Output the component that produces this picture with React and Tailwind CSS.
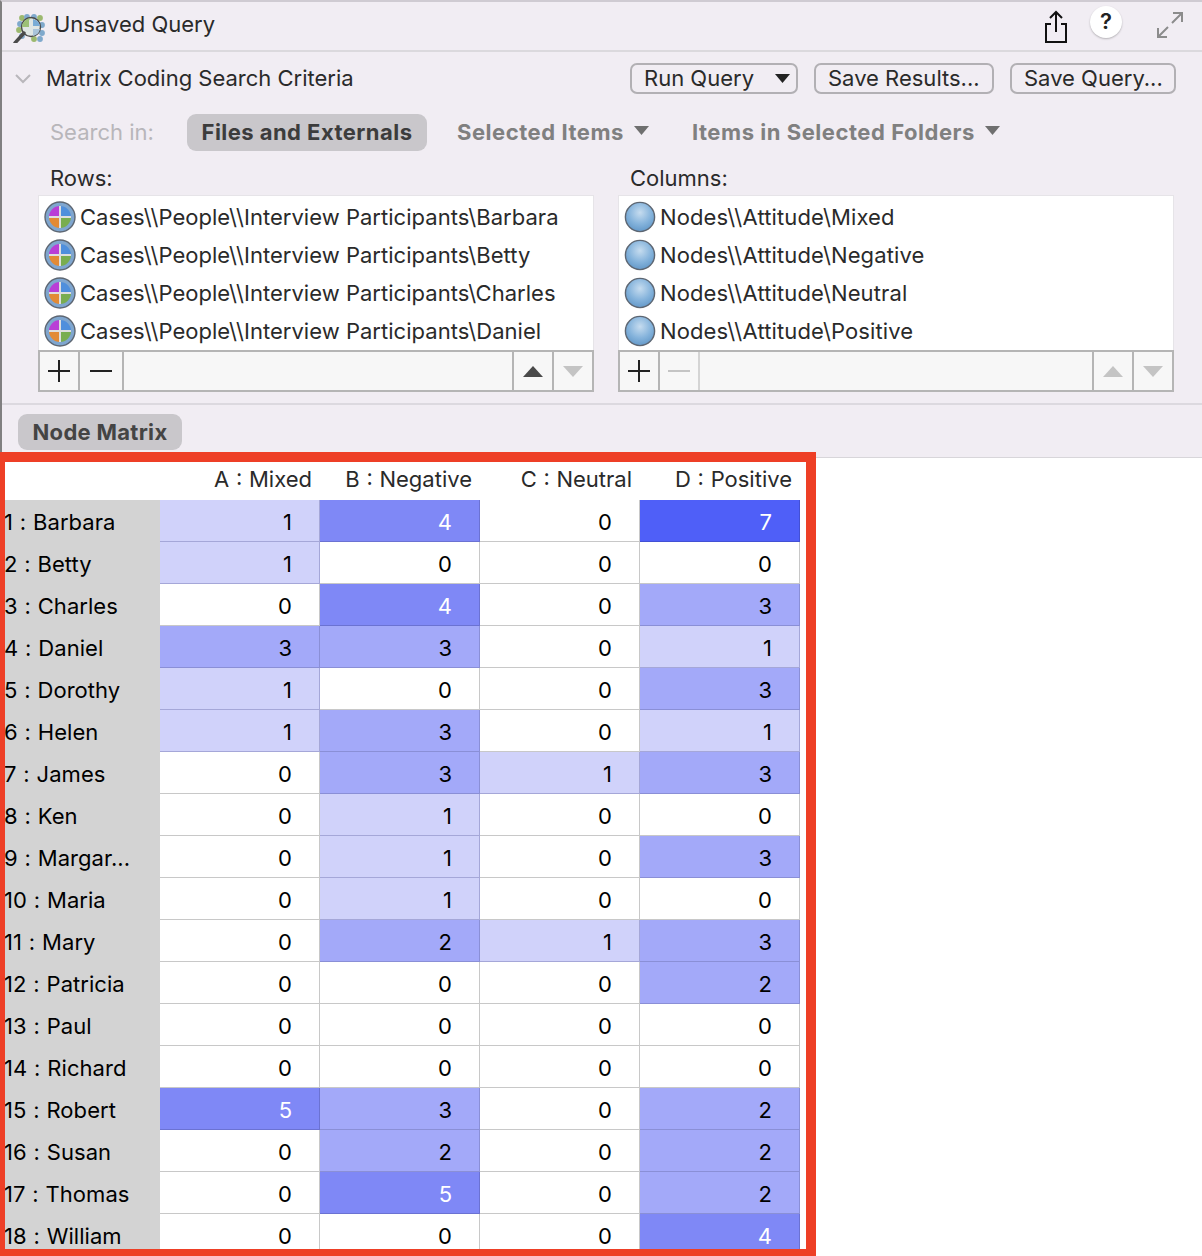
import React from "react";

const FONT = "font-['Inter','Liberation_Sans',sans-serif]";

function CaseIcon() {
  return (
    <svg width="32" height="32" viewBox="0 0 32 32" className="shrink-0">
      <circle cx="16" cy="16" r="15" fill="#7fa6cf" stroke="#5d6672" strokeWidth="1.4" />
      <path d="M16 16V5a11 11 0 0 0-11 11z" fill="#b93ed6" />
      <path d="M16 16V5a11 11 0 0 1 11 11z" fill="#4f8fdc" />
      <path d="M16 16H5a11 11 0 0 0 11 11z" fill="#e28a35" />
      <path d="M16 16h11a11 11 0 0 1-11 11z" fill="#79ad4f" />
      <path d="M16 5v22M5 16h22" stroke="#dedede" strokeWidth="2" />
    </svg>
  );
}

function NodeIcon() {
  return (
    <svg width="32" height="32" viewBox="0 0 32 32" className="shrink-0">
      <defs>
        <radialGradient id="ball" cx="50%" cy="35%" r="70%">
          <stop offset="0%" stopColor="#c6dcef" />
          <stop offset="55%" stopColor="#86b4dc" />
          <stop offset="100%" stopColor="#5d94c6" />
        </radialGradient>
      </defs>
      <circle cx="16" cy="16" r="14.6" fill="url(#ball)" stroke="#5d6672" strokeWidth="1.4" />
    </svg>
  );
}

function QueryIcon() {
  return (
    <svg width="34" height="34" viewBox="0 0 34 34" className="shrink-0">
      {[[10, 4], [15, 3], [22, 3], [28, 4], [8, 10], [30, 11], [7, 16], [30, 19], [28, 25], [22, 25], [10, 22]].map(([x, y], i) => (
        <circle key={i} cx={x} cy={y + 5} r="2.9" fill={i % 3 === 0 ? "#9cb96f" : "#7fa9cc"} />
      ))}
      <circle cx="19" cy="18" r="9.5" fill="#dfe6e4" stroke="#4a4a4a" strokeWidth="1.4" />
      <path d="M19 9a9 9 0 0 0-9 9h7v-7z" fill="#9cc077" />
      <path d="M21 10a9 9 0 0 1 7 7h-7z" fill="#79acd6" />
      <path d="M21 20h7a9 9 0 0 1-7 7z" fill="#a9c4da" />
      <path d="M12 25 3 35" stroke="#4a4a4a" strokeWidth="3.4" strokeLinecap="round" transform="translate(0 -1)" />
    </svg>
  );
}

function Triangle({ down, color }) {
  return (
    <svg width="20" height="11" viewBox="0 0 20 11">
      <path d={down ? "M0 0h20L10 11z" : "M10 0l10 11H0z"} fill={color} />
    </svg>
  );
}

function Caret({ color = "#6f6f6f" }) {
  return (
    <svg width="15" height="9" viewBox="0 0 15 9" className="ml-[10px] mb-1">
      <path d="M0 0h15L7.5 9z" fill={color} />
    </svg>
  );
}

function ToolBar({ minusOff, upOff }) {
  return (
    <div className="flex h-[42px] border-2 border-[#b5b5b5] bg-[#f7f7f7]">
      <div className="flex w-[40px] items-center justify-center border-r-2 border-[#b5b5b5]">
        <svg width="24" height="24" viewBox="0 0 24 24"><path d="M12 1v22M1 12h22" stroke="#222" strokeWidth="2" /></svg>
      </div>
      <div className={`flex items-center justify-center border-r-2 ${minusOff ? "w-[40px] border-[#d4d4d4]" : "w-[44px] border-[#b5b5b5]"}`}>
        <svg width="24" height="4" viewBox="0 0 24 4"><path d="M1 2h22" stroke={minusOff ? "#c4c4c4" : "#222"} strokeWidth="2" /></svg>
      </div>
      <div className="flex-1 border-r-2 border-[#b5b5b5]" />
      <div className="flex w-[40px] items-center justify-center border-r-2 border-[#b5b5b5]">
        <Triangle color={upOff ? "#c4c4c4" : "#4a4a4a"} />
      </div>
      <div className="flex w-[38px] items-center justify-center">
        <Triangle down color="#c4c4c4" />
      </div>
    </div>
  );
}

function ListPanel({ label, items, Icon, minusOff, upOff, track }) {
  return (
    <div className="flex w-[556px] flex-col">
      <div className="h-[34px] pl-[12px] text-[#2a2a2a] leading-[34px]">{label}</div>
      <div className="border border-[#e6e4e8] border-b-0 bg-white pt-[2px]">
        {items.map((t) => (
          <div key={t} className={`flex h-[38px] items-center gap-[4px] pl-[5px] text-[#2a2a2a] whitespace-nowrap ${track}`}>
            <Icon />
            <span>{t}</span>
          </div>
        ))}
      </div>
      <ToolBar minusOff={minusOff} upOff={upOff} />
    </div>
  );
}

function Btn({ w, children }) {
  return (
    <div className={`flex h-[31px] items-center rounded-[7px] border-2 border-[#b2b0b4] pl-[12px] text-[#2a2a2a] ${w}`}>
      {children}
    </div>
  );
}

const CELL = {
  0: "bg-white text-black border-[#c8c8c8]",
  1: "bg-[#d0d2fa] text-black border-[#a5a7d8]",
  2: "bg-[#a3a9f9] text-black border-[#8a8fd6]",
  3: "bg-[#a3a9f9] text-black border-[#8a8fd6]",
  4: "bg-[#7f88f6] text-white border-[#6b72d2]",
  5: "bg-[#7f88f6] text-white border-[#6b72d2]",
  7: "bg-[#4f5ff8] text-white border-[#4350d4]",
};

const ROWS = [
  ["1 : Barbara", 1, 4, 0, 7],
  ["2 : Betty", 1, 0, 0, 0],
  ["3 : Charles", 0, 4, 0, 3],
  ["4 : Daniel", 3, 3, 0, 1],
  ["5 : Dorothy", 1, 0, 0, 3],
  ["6 : Helen", 1, 3, 0, 1],
  ["7 : James", 0, 3, 1, 3],
  ["8 : Ken", 0, 1, 0, 0],
  ["9 : Margar...", 0, 1, 0, 3],
  ["10 : Maria", 0, 1, 0, 0],
  ["11 : Mary", 0, 2, 1, 3],
  ["12 : Patricia", 0, 0, 0, 2],
  ["13 : Paul", 0, 0, 0, 0],
  ["14 : Richard", 0, 0, 0, 0],
  ["15 : Robert", 5, 3, 0, 2],
  ["16 : Susan", 0, 2, 0, 2],
  ["17 : Thomas", 0, 5, 0, 2],
  ["18 : William", 0, 0, 0, 4],
];

export default function App() {
  return (
    <div className={`${FONT} relative h-[1256px] w-[1202px] overflow-hidden bg-white text-[22px]`}>
      <div className="h-[458px] border-t-2 border-l-2 border-b border-t-[#cfcbd2] border-l-[#808080] border-b-[#d8d6da] bg-[#f1edf3]">
        {/* title */}
        <div className="flex h-[50px] items-center border-b-2 border-[#dbd9dd] pl-[10px] pr-[18px]">
          <QueryIcon />
          <span className="mb-[3px] ml-[8px] text-[#2a2a2a]">Unsaved Query</span>
          <div className="ml-auto flex items-center">
            <svg width="24" height="34" viewBox="0 0 24 34" className="mt-[2px]">
              <path d="M7 14H2v18h20V14H17M12 22V2M6 8l6-6 6 6" fill="none" stroke="#111" strokeWidth="2" />
            </svg>
            <div className="mb-[9px] ml-[22px] flex h-[32px] w-[32px] items-center justify-center rounded-full bg-white font-semibold text-[#222] shadow-[0_1px_2px_rgba(0,0,0,0.25)]">?</div>
            <svg width="28" height="28" viewBox="0 0 28 28" className="mb-[2px] ml-[34px]">
              <path d="M17 2h9v9M26 2 16 12M2 17v9h9M2 26l10-10" fill="none" stroke="#8c8c8c" strokeWidth="2" />
            </svg>
          </div>
        </div>
        {/* criteria */}
        <div className="flex h-[53px] items-center pl-[13px] pr-[26px]">
          <svg width="16" height="10" viewBox="0 0 16 10"><path d="M1 1l7 7 7-7" fill="none" stroke="#b9b7bb" strokeWidth="2" /></svg>
          <span className="ml-[15px] text-[#2a2a2a]">Matrix Coding Search Criteria</span>
          <div className="ml-auto flex gap-[16px]">
            <Btn w="w-[168px]">
              <span>Run Query</span>
              <svg width="15" height="9" viewBox="0 0 15 9" className="ml-[21px]"><path d="M0 0h15L7.5 9z" fill="#222" /></svg>
            </Btn>
            <Btn w="w-[180px]">Save Results...</Btn>
            <Btn w="w-[166px]">Save Query...</Btn>
          </div>
        </div>
        {/* search in */}
        <div className="flex h-[46px] items-center pl-[48px] pt-[9px]">
          <span className="w-[137px] text-[#b8b6ba]">Search in:</span>
          <div className="flex h-[37px] w-[240px] items-center justify-center rounded-[9px] bg-[#c9c7cb] font-bold tracking-[0.45px] text-[#3c3c3c]">Files and Externals</div>
          <span className="ml-[30px] flex items-center font-bold tracking-[0.54px] text-[#808080]">Selected Items<Caret /></span>
          <span className="ml-[43px] flex items-center font-bold tracking-[0.54px] text-[#808080]">Items in Selected Folders<Caret /></span>
        </div>
        {/* lists */}
        <div className="mt-[10px] flex gap-[24px] pl-[36px]">
          <ListPanel
            label="Rows:"
            Icon={CaseIcon}
            track="tracking-[0.03px]"
            items={[
              "Cases\\\\People\\\\Interview Participants\\Barbara",
              "Cases\\\\People\\\\Interview Participants\\Betty",
              "Cases\\\\People\\\\Interview Participants\\Charles",
              "Cases\\\\People\\\\Interview Participants\\Daniel",
            ]}
          />
          <ListPanel
            label="Columns:"
            Icon={NodeIcon}
            track="tracking-[0.12px]"
            minusOff
            upOff
            items={[
              "Nodes\\\\Attitude\\Mixed",
              "Nodes\\\\Attitude\\Negative",
              "Nodes\\\\Attitude\\Neutral",
              "Nodes\\\\Attitude\\Positive",
            ]}
          />
        </div>
        <div className="mt-[11px] h-[2px] bg-[#dcd9df]" />
        <div className="pl-[16px] pt-[9px]">
          <div className="flex h-[36px] w-[164px] items-center justify-center rounded-[9px] bg-[#c9c7cb] font-bold tracking-[0.3px] text-[#444]">Node Matrix</div>
        </div>
      </div>

      {/* matrix */}
      <div className="w-[800px] text-black">
        <div className="grid h-[42px] grid-cols-[160px_160px_160px_160px_160px] items-center text-right [word-spacing:0.5px] text-[#2a2a2a]">
          <div />
          <div className="pr-[8px]">A : Mixed</div>
          <div className="pr-[8px]">B : Negative</div>
          <div className="pr-[8px]">C : Neutral</div>
          <div className="pr-[8px]">D : Positive</div>
        </div>
        {ROWS.map(([name, ...vals]) => (
          <div key={name} className="grid h-[42px] grid-cols-[160px_160px_160px_160px_160px]">
            <div className="flex items-center whitespace-nowrap bg-[#d3d3d3] pl-[4px] pt-[2px] tracking-[0.05px] [word-spacing:0.6px]">{name}</div>
            {vals.map((v, i) => (
              <div key={i} className={`flex items-center justify-end border-b border-r pr-[27px] pt-[3px] ${CELL[v]}`}>{v}</div>
            ))}
          </div>
        ))}
      </div>

      {/* red annotation frame */}
      <div className="pointer-events-none absolute left-0 top-[452px] h-[804px] w-[816px] border-t-[10px] border-r-[10px] border-b-[7px] border-l-[5px] border-[#ee3f26]" />
    </div>
  );
}
